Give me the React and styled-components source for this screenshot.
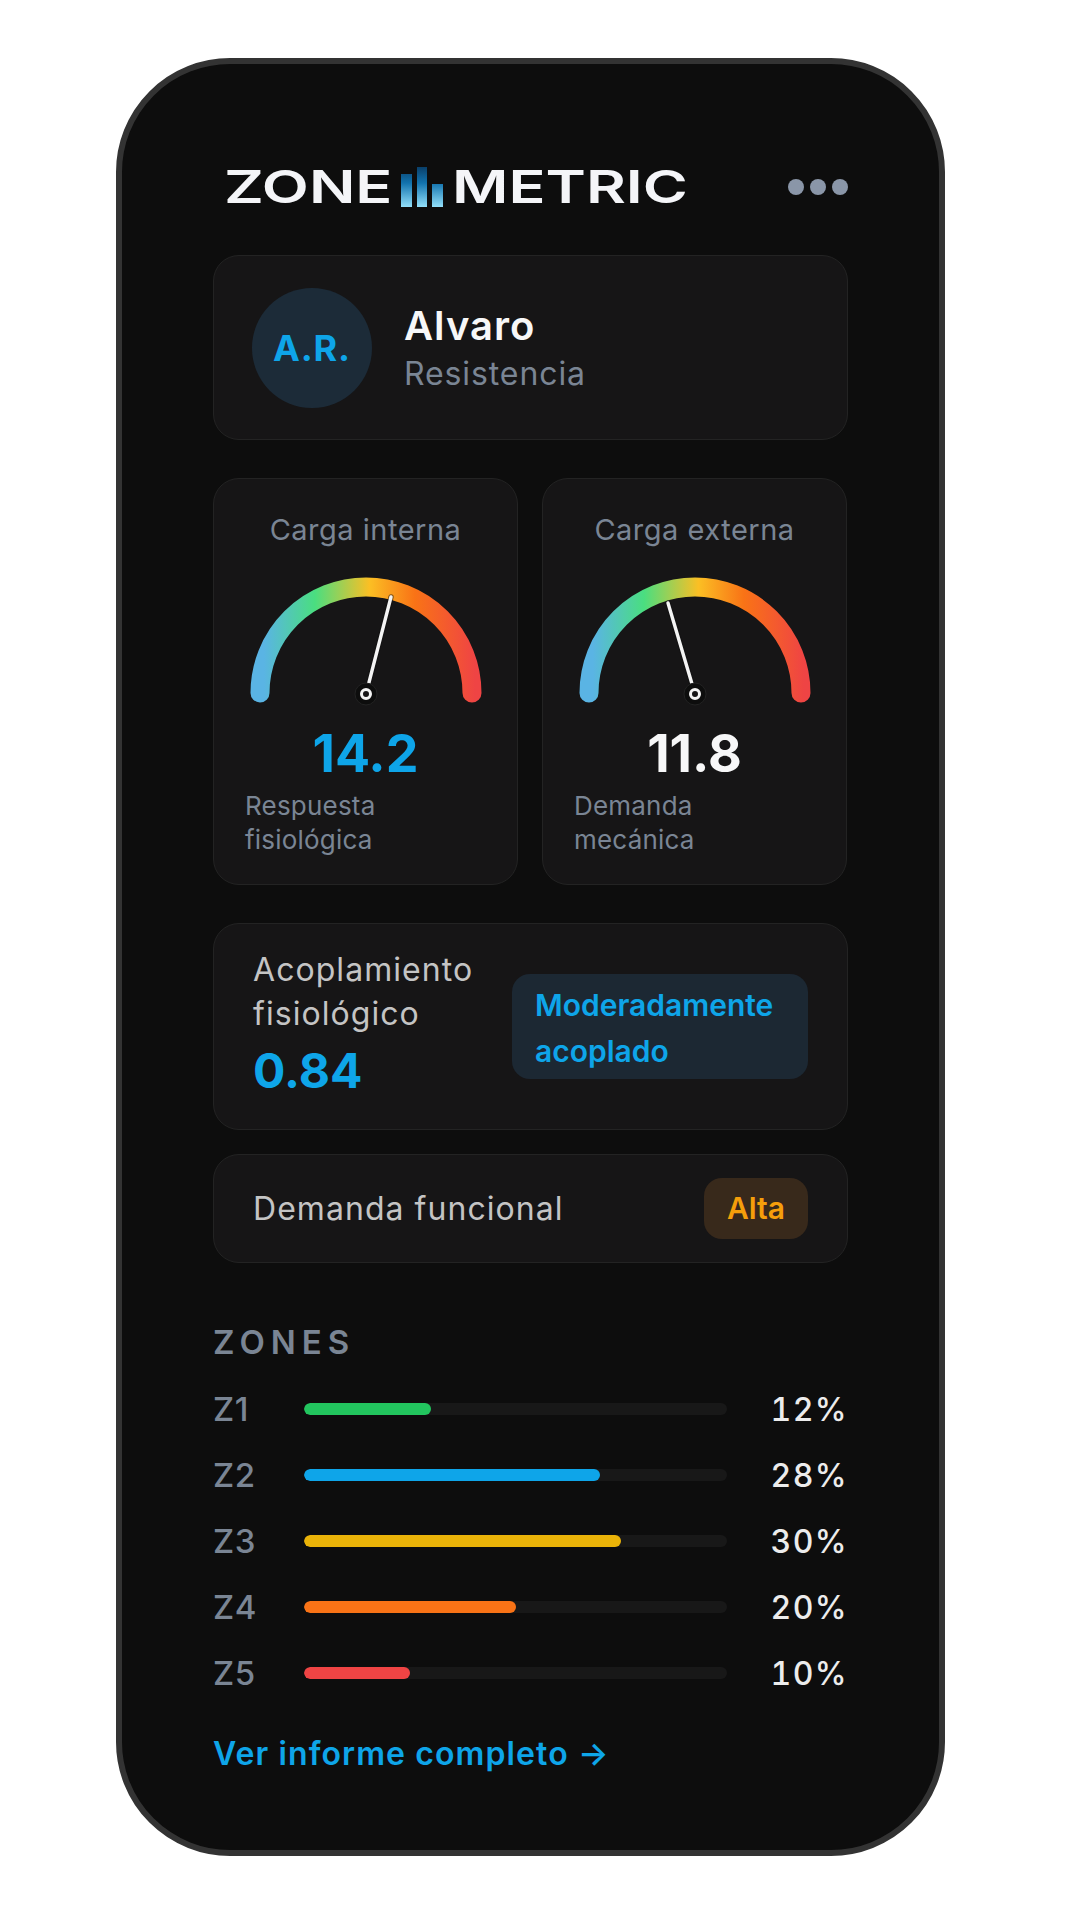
import React from "react";
import styled, { createGlobalStyle } from "styled-components";

const Global = createGlobalStyle`
  html, body { margin: 0; padding: 0; background: #fff; }
  * { box-sizing: border-box; }
  body { font-family: Inter, "Liberation Sans", sans-serif; }
`;

const Page = styled.div`
  width: 1080px;
  height: 1920px;
  padding: 58px 135px 64px 116px;
`;

const Phone = styled.div`
  width: 829px;
  height: 1798px;
  background: #0d0d0d;
  border: 6px solid #333333;
  border-radius: 114px;
  padding: 96px 91px 0;
  display: flex;
  flex-direction: column;
`;

const Header = styled.header`
  height: 54px;
  margin-bottom: 41px;
  padding-left: 11px;
  display: flex;
  align-items: center;
  justify-content: space-between;
`;

const Logo = styled.div`
  display: flex;
  align-items: center;
  height: 54px;
`;

const Word = styled.span`
  display: block;
  width: ${(p) => p.$box}px;
  transform: scaleX(${(p) => p.$stretch});
  transform-origin: left center;
  font-size: 45px;
  line-height: 54px;
  font-weight: 600;
  color: #f4f5f8;
  white-space: nowrap;
`;

const LogoBars = styled.svg`
  display: block;
  margin: 0 9px 0 9px;
  flex: none;
`;

const Dots = styled.div`
  display: flex;
  gap: 6px;
`;

const Dot = styled.span`
  width: 16px;
  height: 16px;
  border-radius: 50%;
  background: #8a96a8;
`;

const Card = styled.section`
  background: #161516;
  border: 1px solid #232323;
  border-radius: 26px;
`;

const ProfileCard = styled(Card)`
  height: 185px;
  padding: 0 38px;
  display: flex;
  align-items: center;
  gap: 32px;
`;

const Avatar = styled.div`
  width: 120px;
  height: 120px;
  border-radius: 50%;
  background: #1c2b38;
  color: #0ea5e9;
  display: flex;
  align-items: center;
  justify-content: center;
  font-size: 36px;
  font-weight: 700;
  letter-spacing: 0.8px;
`;

const Name = styled.div`
  color: #f7f7f8;
  font-size: 40px;
  line-height: 46px;
  font-weight: 600;
  letter-spacing: 1px;
`;

const Role = styled.div`
  color: #7a8594;
  font-size: 32px;
  line-height: 38px;
  letter-spacing: 0.9px;
  margin-top: 6px;
`;

const GaugeRow = styled.div`
  display: grid;
  grid-template-columns: 305px 305px;
  gap: 24px;
  margin-top: 38px;
`;

const GaugeCard = styled(Card)`
  height: 407px;
  padding: 33px 31px 0;
  display: flex;
  flex-direction: column;
`;

const GaugeTitle = styled.div`
  color: #7a8594;
  font-size: 29px;
  line-height: 36px;
  letter-spacing: 0.5px;
  text-align: center;
  margin-bottom: 21px;
`;

const GaugeSvg = styled.svg`
  display: block;
  align-self: center;
  flex: none;
`;

const GaugeValue = styled.div`
  color: ${(p) => p.$color};
  font-size: 52px;
  line-height: 62px;
  font-weight: 700;
  text-align: center;
  margin-top: 12px;
`;

const GaugeNote = styled.div`
  color: #7a8594;
  font-size: 26px;
  line-height: 34px;
  letter-spacing: 0.2px;
  margin-top: 4px;
`;

const CouplingCard = styled(Card)`
  height: 207px;
  margin-top: 38px;
  padding: 0 39px;
  display: flex;
  align-items: center;
  justify-content: space-between;
`;

const CouplingText = styled.div`
  display: flex;
  flex-direction: column;
`;

const BodyLabel = styled.div`
  color: #c4c4c4;
  font-size: 32px;
  line-height: 44px;
  letter-spacing: 1.05px;
`;

const CouplingValue = styled.div`
  color: #0ea5e9;
  font-size: 48px;
  line-height: 68px;
  font-weight: 700;
  margin-top: 1px;
`;

const CouplingPill = styled.div`
  width: 296px;
  padding: 8px 23px 5px;
  border-radius: 18px;
  background: #1c2833;
  color: #0ea5e9;
  font-size: 30px;
  line-height: 46px;
  font-weight: 600;
`;

const DemandCard = styled(Card)`
  height: 109px;
  margin-top: 24px;
  padding: 0 39px;
  display: flex;
  align-items: center;
  justify-content: space-between;
`;

const DemandPill = styled.div`
  width: 104px;
  height: 61px;
  border-radius: 18px;
  background: #38291b;
  color: #f59e0b;
  font-size: 30px;
  line-height: 61px;
  font-weight: 600;
  text-align: center;
`;

const ZonesTitle = styled.h2`
  margin: 61px 0 16px;
  color: #7a8594;
  font-size: 33px;
  line-height: 36px;
  font-weight: 600;
  letter-spacing: 6px;
`;

const ZoneRow = styled.div`
  height: 66px;
  display: grid;
  grid-template-columns: 91px 1fr 121px;
  align-items: center;
`;

const ZoneName = styled.div`
  color: #7a8594;
  font-size: 33px;
  font-weight: 500;
  letter-spacing: 0.5px;
`;

const Track = styled.div`
  height: 12px;
  border-radius: 6px;
  background: #181818;
  overflow: hidden;
`;

const Fill = styled.div`
  height: 100%;
  border-radius: 6px;
  background: ${(p) => p.$color};
`;

const ZonePct = styled.div`
  color: #ececec;
  font-size: 32px;
  font-weight: 500;
  letter-spacing: 1.4px;
  font-variant-numeric: tabular-nums;
  text-align: right;
`;

const ReportLink = styled.a`
  margin-top: 28px;
  color: #0ea5e9;
  font-size: 32px;
  line-height: 40px;
  font-weight: 600;
  letter-spacing: 1.1px;
  text-decoration: none;
`;

const Gauge = ({ id, tip }) => (
  <GaugeSvg width="240" height="142" viewBox="0 0 240 142">
    <defs>
      <linearGradient id={id} gradientUnits="userSpaceOnUse" x1="4" y1="0" x2="236" y2="0">
        <stop offset="0" stopColor="#5ab4e4" />
        <stop offset="0.06" stopColor="#5ab4e4" />
        <stop offset="0.28" stopColor="#4ade80" />
        <stop offset="0.515" stopColor="#fbbf24" />
        <stop offset="0.71" stopColor="#f97316" />
        <stop offset="0.97" stopColor="#ef4444" />
      </linearGradient>
    </defs>
    <path
      d="M14 124 A106 106 0 0 1 226 124"
      fill="none"
      stroke={`url(#${id})`}
      strokeWidth="19"
      strokeLinecap="round"
    />
    <line x1="120" y1="125" x2={tip[0]} y2={tip[1] + 12} stroke="#111" strokeWidth="5.5" strokeLinecap="round" opacity="0.5" />
    <line x1="120" y1="125" x2={tip[0]} y2={tip[1] + 12} stroke="#f4f4f4" strokeWidth="3.4" strokeLinecap="round" />
    <circle cx="120" cy="125" r="11" fill="#0d0d0d" stroke="#232323" strokeWidth="1" />
    <circle cx="120" cy="125" r="4.5" fill="#161516" stroke="#f4f4f4" strokeWidth="3" />
  </GaugeSvg>
);

const zones = [
  ["Z1", 30, "#22c55e", "12%"],
  ["Z2", 70, "#0ea5e9", "28%"],
  ["Z3", 75, "#eab308", "30%"],
  ["Z4", 50, "#f97316", "20%"],
  ["Z5", 25, "#ef4444", "10%"],
];

export default function App() {
  return (
    <Page>
      <Global />
      <Phone>
        <Header>
          <Logo>
            <Word $box={168} $stretch={1.36}>ZONE</Word>
            <LogoBars width="42" height="40" viewBox="0 0 42 40">
              <defs>
                <linearGradient id="logoBar" gradientUnits="userSpaceOnUse" x1="0" y1="0" x2="0" y2="40">
                  <stop offset="0" stopColor="#0a3f69" />
                  <stop offset="0.4" stopColor="#1273ae" />
                  <stop offset="1" stopColor="#93e0fa" />
                </linearGradient>
              </defs>
              <rect x="0" y="7" width="11" height="33" fill="url(#logoBar)" />
              <rect x="16" y="0" width="10" height="40" fill="url(#logoBar)" />
              <rect x="31" y="17" width="11" height="23" fill="url(#logoBar)" />
            </LogoBars>
            <Word $box={231} $stretch={1.36}>METRIC</Word>
          </Logo>
          <Dots>
            <Dot />
            <Dot />
            <Dot />
          </Dots>
        </Header>

        <ProfileCard>
          <Avatar>A.R.</Avatar>
          <div>
            <Name>Alvaro</Name>
            <Role>Resistencia</Role>
          </div>
        </ProfileCard>

        <GaugeRow>
          <GaugeCard>
            <GaugeTitle>Carga interna</GaugeTitle>
            <Gauge id="gaugeA" tip={[145, 16]} />
            <GaugeValue $color="#0ea5e9">14.2</GaugeValue>
            <GaugeNote>Respuesta<br />fisiológica</GaugeNote>
          </GaugeCard>
          <GaugeCard>
            <GaugeTitle>Carga externa</GaugeTitle>
            <Gauge id="gaugeB" tip={[93, 22]} />
            <GaugeValue $color="#f7f7f8">11.8</GaugeValue>
            <GaugeNote>Demanda<br />mecánica</GaugeNote>
          </GaugeCard>
        </GaugeRow>

        <CouplingCard>
          <CouplingText>
            <BodyLabel>Acoplamiento<br />fisiológico</BodyLabel>
            <CouplingValue>0.84</CouplingValue>
          </CouplingText>
          <CouplingPill>Moderadamente acoplado</CouplingPill>
        </CouplingCard>

        <DemandCard>
          <BodyLabel>Demanda funcional</BodyLabel>
          <DemandPill>Alta</DemandPill>
        </DemandCard>

        <ZonesTitle>ZONES</ZonesTitle>
        {zones.map(([name, width, color, pct]) => (
          <ZoneRow key={name}>
            <ZoneName>{name}</ZoneName>
            <Track>
              <Fill $color={color} style={{ width: `${width}%` }} />
            </Track>
            <ZonePct>{pct}</ZonePct>
          </ZoneRow>
        ))}

        <ReportLink href="#">Ver informe completo →</ReportLink>
      </Phone>
    </Page>
  );
}
